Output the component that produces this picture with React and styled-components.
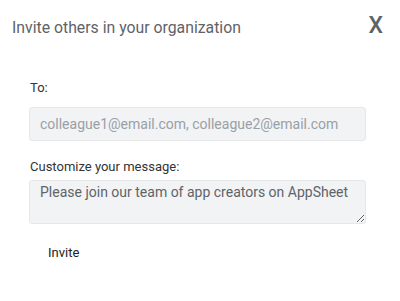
import React from "react";
import styled, { createGlobalStyle } from "styled-components";

const Global = createGlobalStyle`
  html, body { margin: 0; padding: 0; background: #fff; }
  body { font-family: Roboto, "Noto Sans", Arial, sans-serif; }
`;

const Dialog = styled.div`
  width: 400px;
  height: 301px;
  box-sizing: border-box;
  display: flex;
  flex-direction: column;
`;

const Header = styled.div`
  display: flex;
  align-items: center;
  justify-content: space-between;
  padding: 14px 17px 0 12px;
  height: 26px;
`;

const Title = styled.h2`
  margin: 0;
  font-size: 15.8px;
  font-weight: 400;
  color: #5f6368;
`;

const Close = styled.button`
  border: 0;
  background: none;
  padding: 0;
  margin-top: -4px;
  font-family: Roboto, Arial, sans-serif;
  font-size: 23px;
  font-weight: 500;
  color: #5f6368;
  line-height: 1;
  cursor: pointer;
`;

const Body = styled.div`
  display: flex;
  flex-direction: column;
  padding: 40px 34px 0 29px;
`;

const Label = styled.label`
  font-size: 13px;
  color: #333;
  margin-left: 1px;
  margin-bottom: ${(p) => p.$gap}px;
`;

const fieldBase = `
  box-sizing: border-box;
  width: 337px;
  background: #f1f3f4;
  border: 1px solid #e6e7e8;
  border-radius: 3px;
  font-family: Roboto, Arial, sans-serif;
  font-size: 14px;
  padding: 0 10px;
  outline: none;
`;

const Input = styled.input`
  ${fieldBase}
  height: 34px;
  color: #444;
  margin-bottom: 18px;
  &::placeholder { color: #9aa0a6; }
`;

const TextArea = styled.textarea`
  ${fieldBase}
  height: 44px;
  padding-top: 3px;
  color: #5f6368;
  resize: vertical;
  margin-bottom: 15px;
`;

const InviteButton = styled.button`
  align-self: flex-start;
  border: 0;
  background: none;
  font-family: Roboto, Arial, sans-serif;
  font-size: 13px;
  color: #222;
  padding: 6px 19px;
  cursor: pointer;
`;

export default function App() {
  return (
    <>
      <Global />
      <Dialog>
        <Header>
          <Title>Invite others in your organization</Title>
          <Close aria-label="Close">X</Close>
        </Header>
        <Body>
          <Label $gap={12}>To:</Label>
          <Input placeholder="colleague1@email.com, colleague2@email.com" />
          <Label $gap={6}>Customize your message:</Label>
          <TextArea defaultValue="Please join our team of app creators on AppSheet" />
          <InviteButton>Invite</InviteButton>
        </Body>
      </Dialog>
    </>
  );
}
